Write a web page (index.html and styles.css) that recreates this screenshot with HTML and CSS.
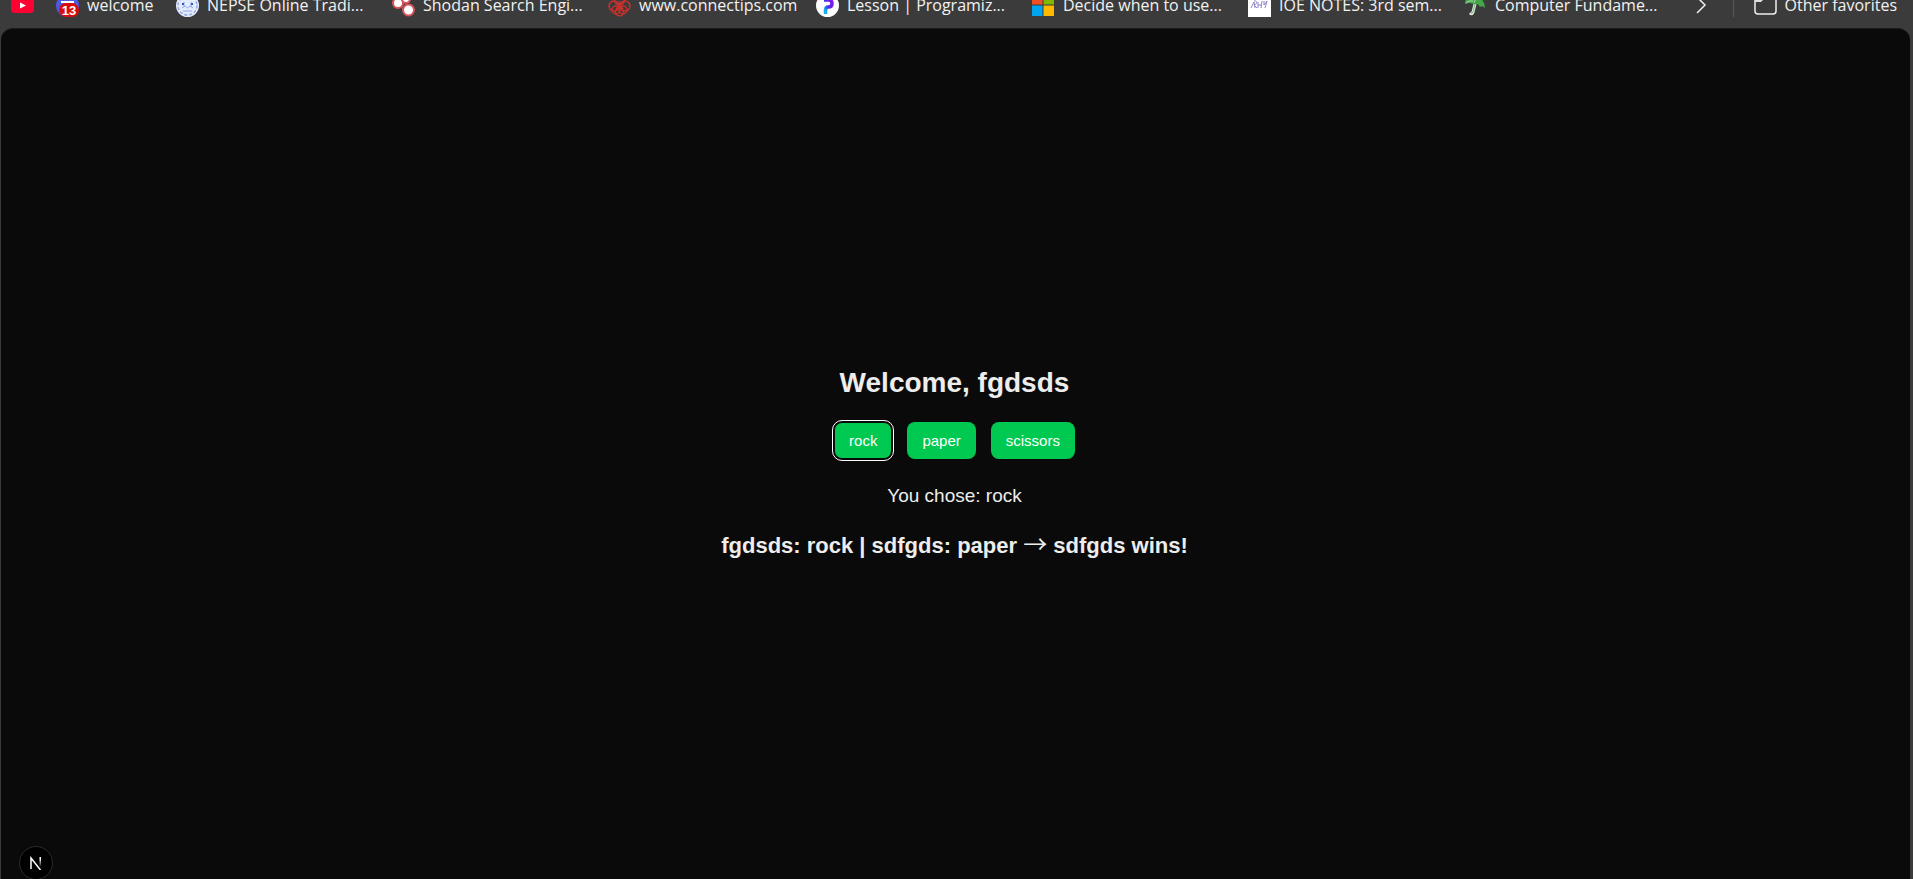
FILE: index.html
```html
<!DOCTYPE html>
<html lang="en">
<head>
<meta charset="utf-8">
<title>Rock Paper Scissors</title>
<link rel="stylesheet" href="styles.css">
</head>
<body>
<nav class="bookmarks" aria-label="Favorites">
  <a class="bookmark bookmark-icon-only" href="#" aria-label="YouTube">
    <svg class="icon" viewBox="0 0 23 23"><rect y="3" width="23" height="16" rx="4" fill="#ff0033"/><path d="M9 8.500v6l6-3z" fill="#fff"/></svg>
  </a>
  <a class="bookmark bookmark-short" href="#">
    <svg class="icon" viewBox="0 0 23 23"><circle cx="11.500" cy="11.500" r="11.500" fill="#4a5be0"/><path d="M5 8h13" stroke="#fff" stroke-width="2"/><rect x="3" y="9" width="20" height="14" rx="7" fill="#d90b0b"/><text x="13" y="20.500" text-anchor="middle" class="icon-count">13</text></svg>
    <span class="label">welcome</span>
  </a>
  <a class="bookmark" href="#">
    <svg class="icon" viewBox="0 0 23 23"><circle cx="11.500" cy="11.500" r="11.500" fill="#e4ebfb"/><g fill="none" stroke="#8fa8e8"><circle cx="11.500" cy="11.500" r="9.500" stroke-width="1.500" stroke-dasharray="3 2"/><path d="M6 14l3-2 2.500 2 2.500-2 3 2M7 17h9M8 8v5M15 8v5"/></g><g fill="#3454c4"><rect x="6" y="9" width="2" height="2"/><rect x="15" y="9" width="2" height="2"/></g></svg>
    <span class="label">NEPSE Online Tradi...</span>
  </a>
  <a class="bookmark" href="#">
    <svg class="icon" viewBox="0 0 23 23"><g fill="#fff" stroke="#d9555c" stroke-width="2"><circle cx="6" cy="9" r="5"/><circle cx="14" cy="5" r="4"/><circle cx="16.500" cy="16" r="5.500"/></g></svg>
    <span class="label">Shodan Search Engi...</span>
  </a>
  <a class="bookmark bookmark-snug" href="#">
    <svg class="icon" viewBox="0 0 23 23"><g fill="none" stroke="#c9302c" stroke-width="1.500"><circle cx="6" cy="12" r="5"/><circle cx="17" cy="12" r="5"/><circle cx="11.500" cy="6" r="5"/><circle cx="8" cy="16" r="4"/><circle cx="15" cy="16" r="4"/><circle cx="11.500" cy="18" r="4"/><path d="M8 8l7 7M15 8l-7 7M11.500 7v9"/></g></svg>
    <span class="label">www.connectips.com</span>
  </a>
  <a class="bookmark" href="#">
    <svg class="icon" viewBox="0 0 23 23"><defs><linearGradient id="pz" x1="0" y1="1" x2="1" y2="0"><stop offset=".2" stop-color="#12b4f5"/><stop offset=".5" stop-color="#4a2cf0"/><stop offset="1" stop-color="#8a16e8"/></linearGradient></defs><circle cx="11.500" cy="11.500" r="11.500" fill="#fff"/><path d="M9.500 20v-4q0-3 3-3 3.500 0 3.500-3.500t-3.500-3.500H8" fill="none" stroke="url(#pz)" stroke-width="3.500"/></svg>
    <span class="label">Lesson | Programiz...</span>
  </a>
  <a class="bookmark" href="#">
    <svg class="icon" viewBox="0 0 23 23"><path fill="#f25022" d="M0 0h10.500v10.500H0z"/><path fill="#7fba00" d="M11.500 0H22v10.500H11.500z"/><path fill="#00a4ef" d="M0 11.500h10.500V22H0z"/><path fill="#ffb900" d="M11.500 11.500H22V22H11.500z"/></svg>
    <span class="label">Decide when to use...</span>
  </a>
  <a class="bookmark" href="#">
    <svg class="icon" viewBox="0 0 23 23"><path fill="#fff" d="M0 0h23v23H0z"/><path d="M3 14l3-6 1 6M6 7c4-1 3 4 0 4l3 3M10 8v6M10 11h4M14 7l-1 7M16 7v4l3-4-2 7" fill="none" stroke="#8d86cc"/></svg>
    <span class="label">IOE NOTES: 3rd sem...</span>
  </a>
  <a class="bookmark" href="#">
    <svg class="icon" viewBox="0 0 23 23"><path d="M11 10l-2 8q-1 3-3 1" fill="none" stroke="#d8ecd8" stroke-width="3"/><path d="M11 10l-2 8q-1 2-2 1" fill="none" stroke="#75b879"/><path d="M1 10Q1 2 9 1q11 1 12 13-3-3-5-1-2-4-7-3-4-2-8 0z" fill="#43a64a"/><path d="M2 9q3-3 7-2M10 9q1-4 3-5" fill="none" stroke="#a5dba6"/></svg>
    <span class="label">Computer Fundame...</span>
  </a>
  <button class="more" type="button" aria-label="More favorites">
    <svg class="icon" viewBox="0 0 23 23"><path d="M7 3l8 8-8 8" fill="none" stroke="#eee" stroke-width="1.500"/></svg>
  </button>
  <a class="bookmark bookmark-other" href="#">
    <svg class="icon" viewBox="0 0 23 23"><path d="M1 8h6l3-3H2z" fill="#ddd"/><path d="M1 4q0-3 3-3h4l3 3h8q3 0 3 3v10q0 3-3 3H4q-3 0-3-3z" fill="none" stroke="#eee" stroke-width="1.500"/></svg>
    <span class="label">Other favorites</span>
  </a>
</nav>
<main class="page">
  <h1 class="title">Welcome, fgdsds</h1>
  <div class="choices">
    <button class="choice choice-active" type="button">rock</button>
    <button class="choice" type="button">paper</button>
    <button class="choice" type="button">scissors</button>
  </div>
  <p class="chosen">You chose: rock</p>
  <p class="result">fgdsds: rock | sdfgds: paper <span class="arrow">→</span> sdfgds wins!</p>
</main>
<button class="dev-badge" type="button" aria-label="Open Next.js Dev Tools">
  <svg class="dev-mark" viewBox="0 0 14 14"><defs><linearGradient id="nx" x1="0" y1="0" x2="0" y2="1"><stop offset=".2" stop-color="#fff"/><stop offset="1" stop-color="#fff" stop-opacity="0"/></linearGradient></defs><path d="M2 13V2l9.500 12" fill="none" stroke="#fff" stroke-width="1.500"/><path d="M10.500 1H12v10h-1.500z" fill="url(#nx)"/></svg>
</button>
</body>
</html>
```
FILE: styles.css
```css
* {
  box-sizing: border-box;
}

body {
  display: flex;
  flex-direction: column;
  height: 100vh;
  margin: 0;
  overflow: hidden;
  background: #3b3b3b;
  color: #ededed;
  font-family: "Liberation Sans", Arial, sans-serif;
}

.bookmarks {
  display: flex;
  flex: none;
  align-items: flex-end;
  height: 28px;
  padding: 0 16px 11px 11px;
  overflow: hidden;
}

.bookmark {
  display: flex;
  flex: none;
  align-items: center;
  gap: 8px;
  width: 216px;
  height: 23px;
  color: #f2f2f2;
  font: 16px/23px "Open Sans", "Noto Sans", sans-serif;
  text-decoration: none;
  white-space: nowrap;
}

.bookmark-icon-only {
  width: 45px;
}

.bookmark-short {
  width: 120px;
}

.bookmark-snug {
  width: 208px;
}

.icon {
  flex: none;
  width: 23px;
  height: 23px;
}

.icon-count {
  fill: #fff;
  font: bold 13px "Liberation Sans", Arial, sans-serif;
}

.more {
  height: 23px;
  margin-left: auto;
  padding: 0 20px 0 0;
  border: 0;
  border-right: 1px solid #585858;
  background: none;
}

.bookmark-other {
  width: auto;
  padding-left: 20px;
}

.page {
  display: flex;
  flex: 1;
  flex-direction: column;
  align-items: center;
  justify-content: center;
  margin: 0 3px 0 1px;
  padding: 18px 2px 0 0;
  border-top: 1px solid #1c1c1c;
  border-radius: 12px 12px 0 0;
  background: #0a0a0a;
}

.title {
  margin: 0 0 22px;
  font-size: 28px;
  line-height: 34px;
}

.choices {
  display: flex;
  gap: 15px;
  margin-bottom: 24px;
}

.choice {
  padding: 8px 15px;
  border: 0;
  border-radius: 8px;
  background: #00c951;
  color: #fff;
  font: 15px/21px "Liberation Sans", Arial, sans-serif;
}

.choice-active {
  border: 1px solid #0a0a0a;
  padding: 7px 14px;
  outline: 1px solid #fff;
  outline-offset: 1px;
}

.chosen {
  margin: 0 0 22px;
  font-size: 19px;
  line-height: 26px;
}

.result {
  margin: 0;
  font-size: 22px;
  font-weight: 700;
  line-height: 30px;
}

.arrow {
  font: 400 24px/1 "Noto Sans CJK JP", sans-serif;
}

.dev-badge {
  position: absolute;
  bottom: -1px;
  left: 19px;
  display: grid;
  place-items: center;
  width: 34px;
  height: 34px;
  padding: 0;
  border: 1px solid #2a2a2a;
  border-radius: 50%;
  background: #000;
}

.dev-mark {
  width: 14px;
  height: 14px;
}
```
